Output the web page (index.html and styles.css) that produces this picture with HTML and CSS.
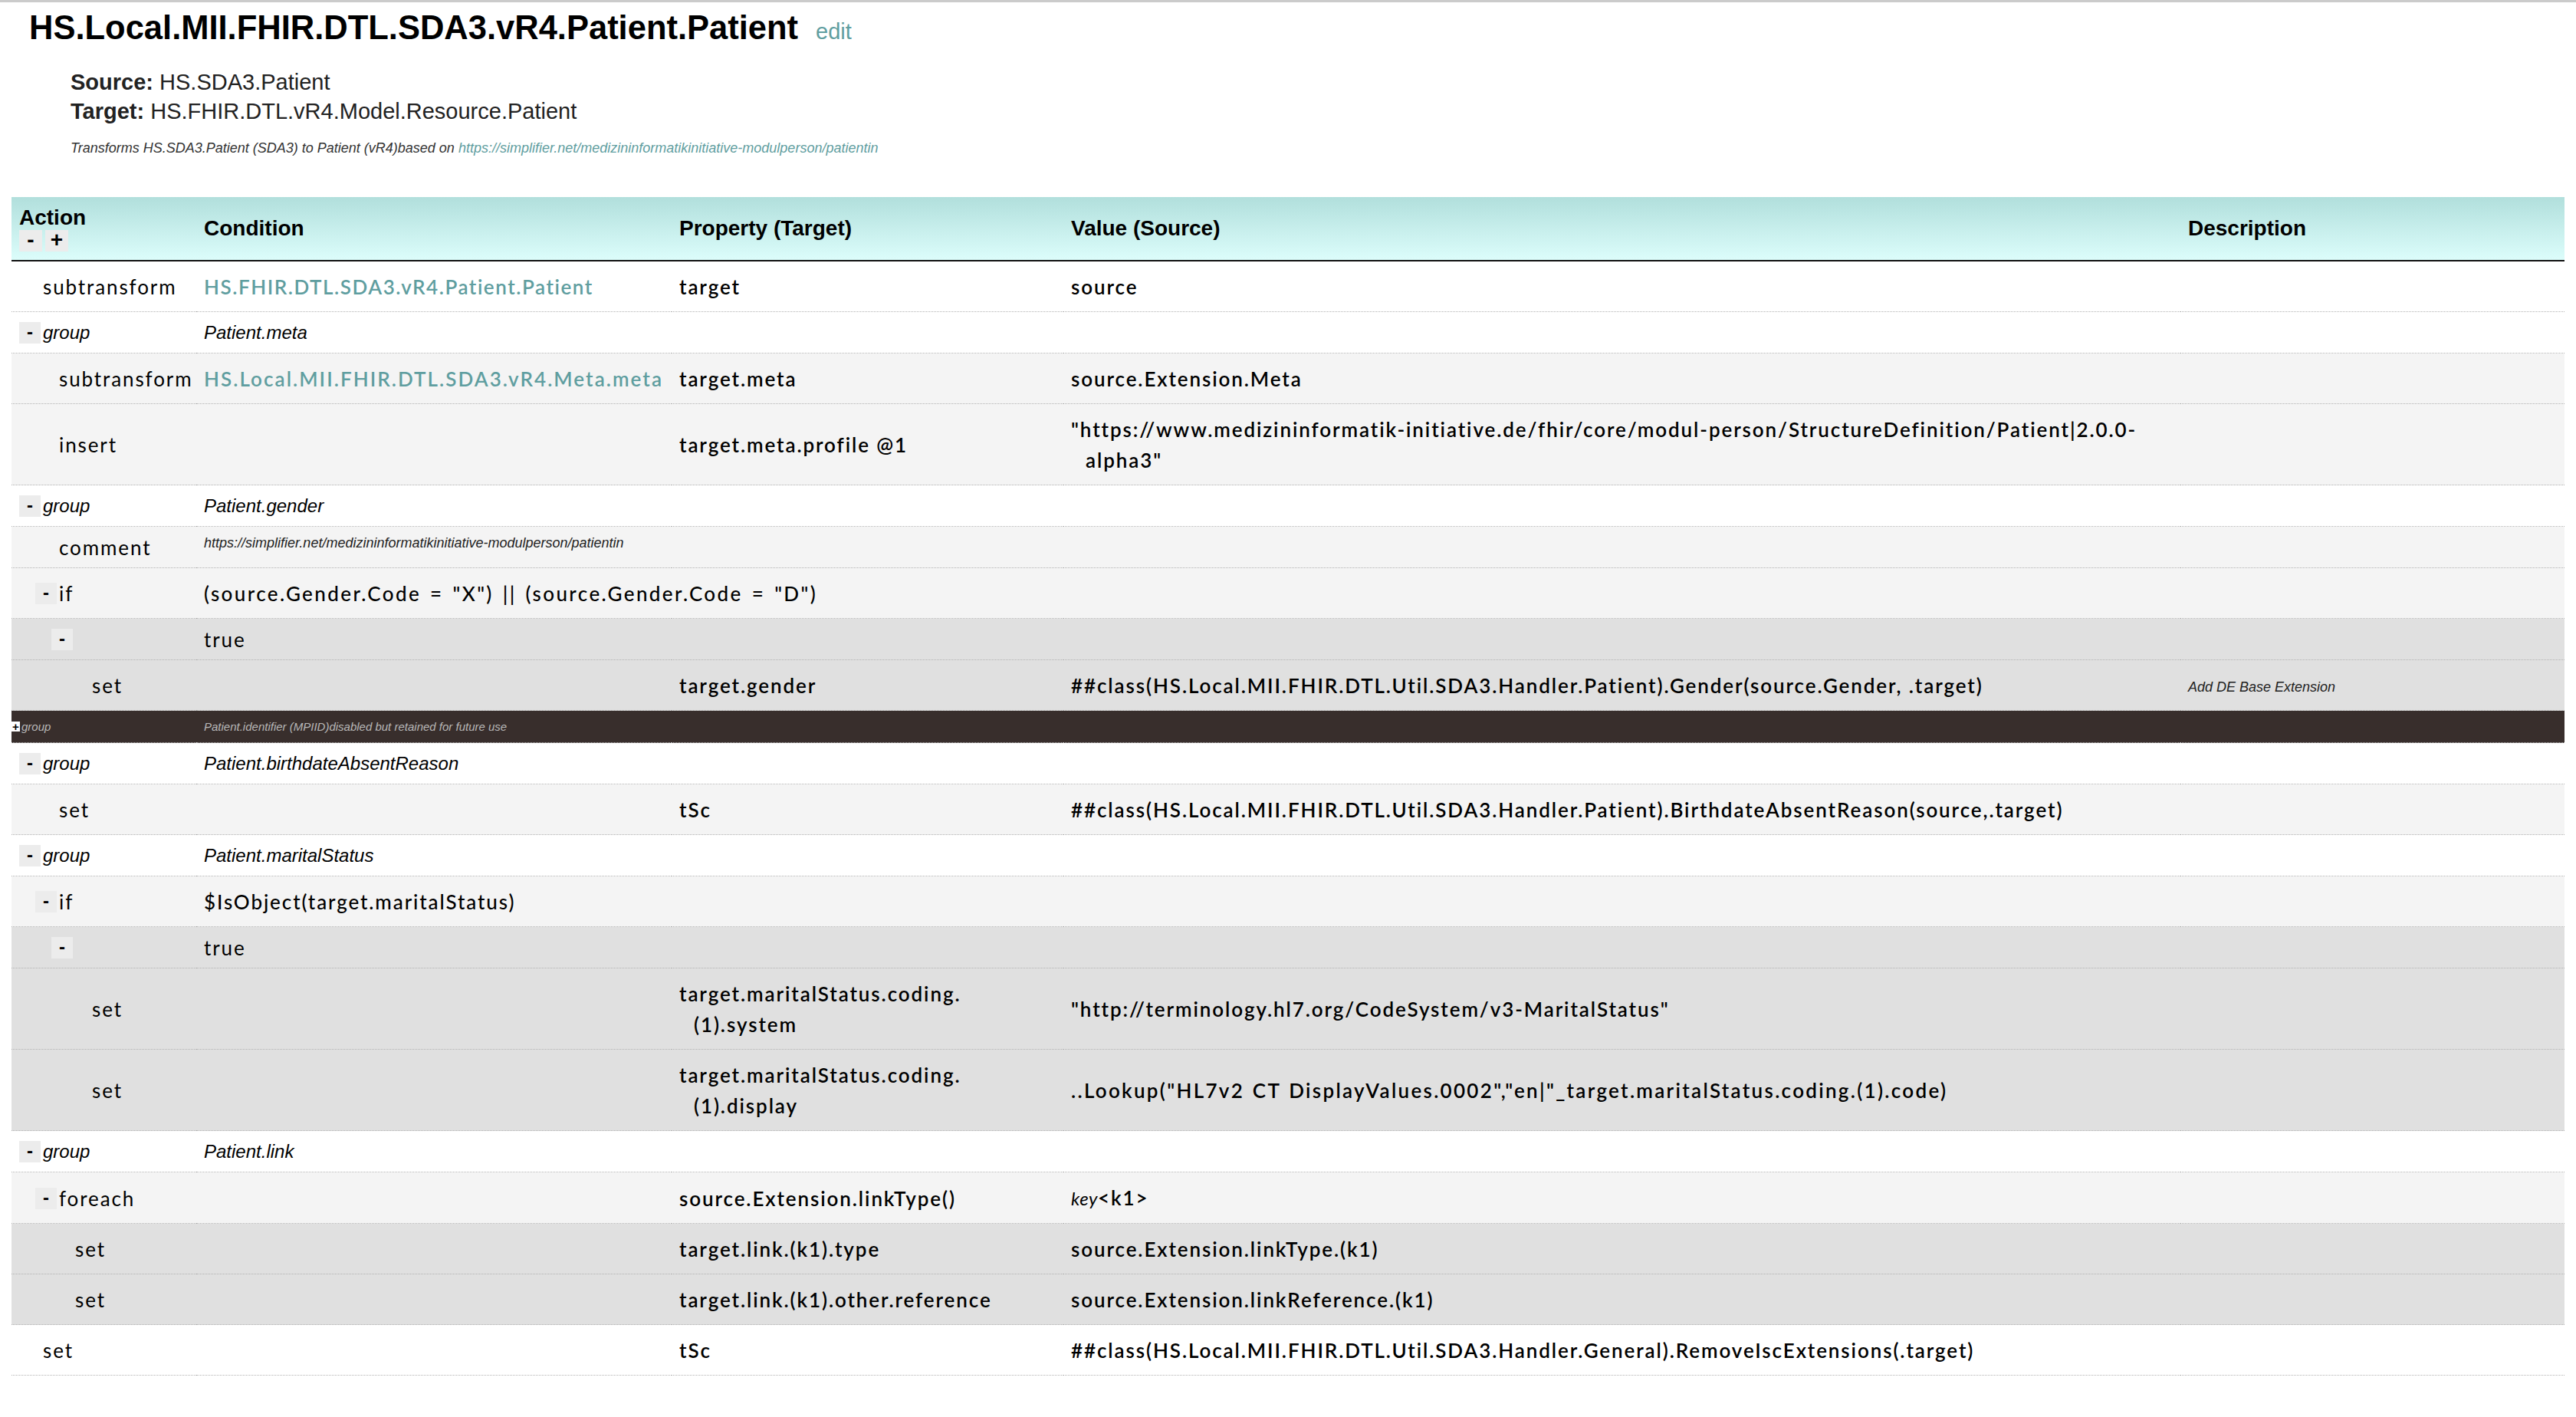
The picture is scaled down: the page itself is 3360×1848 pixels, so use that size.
FILE: index.html
```html
<!DOCTYPE html>
<html>
<head>
<meta charset="utf-8">
<title>HS.Local.MII.FHIR.DTL.SDA3.vR4.Patient.Patient</title>
<link rel="stylesheet" href="styles.css">
</head>
<body>
<div class="page">
  <h1 class="title">HS.Local.MII.FHIR.DTL.SDA3.vR4.Patient.Patient<a class="edit" href="#">edit</a></h1>
  <div class="meta">
    <div><b>Source:</b> HS.SDA3.Patient</div>
    <div><b>Target:</b> HS.FHIR.DTL.vR4.Model.Resource.Patient</div>
  </div>
  <p class="desc">Transforms HS.SDA3.Patient (SDA3) to Patient (vR4)based on <a href="#">https://simplifier.net/medizininformatikinitiative-modulperson/patientin</a></p>

  <table class="dtl">
    <colgroup>
      <col class="c-act"><col class="c-cond"><col class="c-prop"><col class="c-val"><col class="c-desc">
    </colgroup>
    <thead>
      <tr>
        <th class="h-act">Action<div class="h-btns"><span class="htg">-</span><span class="htg">+</span></div></th>
        <th>Condition</th>
        <th>Property (Target)</th>
        <th>Value (Source)</th>
        <th>Description</th>
      </tr>
    </thead>
    <tbody>
      <tr class="lv0">
        <td class="act d0"><div class="ac"><span class="sp"></span>subtransform</div></td>
        <td><span class="lnk">HS.FHIR.DTL.SDA3.vR4.Patient.Patient</span></td>
        <td><div class="code">target</div></td>
        <td><div class="code">source</div></td>
        <td></td>
      </tr>
      <tr class="grp">
        <td class="act d0"><div class="ac"><span class="tg">-</span><span class="gn">group</span></div></td>
        <td><span class="gn">Patient.meta</span></td>
        <td></td><td></td><td></td>
      </tr>
      <tr class="lv1">
        <td class="act d1"><div class="ac"><span class="sp"></span>subtransform</div></td>
        <td><span class="lnk lnk-w">HS.Local.MII.FHIR.DTL.SDA3.vR4.Meta.meta</span></td>
        <td><div class="code">target.meta</div></td>
        <td><div class="code">source.Extension.Meta</div></td>
        <td></td>
      </tr>
      <tr class="lv1">
        <td class="act d1"><div class="ac"><span class="sp"></span>insert</div></td>
        <td></td>
        <td><div class="code">target.meta.profile @1</div></td>
        <td><div class="code">"https://www.medizininformatik-initiative.de/fhir/core/modul-person/StructureDefinition/Patient|2.0.0-<br>alpha3"</div></td>
        <td></td>
      </tr>
      <tr class="grp">
        <td class="act d0"><div class="ac"><span class="tg">-</span><span class="gn">group</span></div></td>
        <td><span class="gn">Patient.gender</span></td>
        <td></td><td></td><td></td>
      </tr>
      <tr class="lv1">
        <td class="act d1"><div class="ac"><span class="sp"></span>comment</div></td>
        <td class="top"><span class="note">https://simplifier.net/medizininformatikinitiative-modulperson/patientin</span></td>
        <td></td><td></td><td></td>
      </tr>
      <tr class="lv1">
        <td class="act d1"><div class="ac"><span class="tg">-</span>if</div></td>
        <td><div class="expr loose">(source.Gender.Code = "X") || (source.Gender.Code = "D")</div></td>
        <td></td><td></td><td></td>
      </tr>
      <tr class="lv2">
        <td class="act d2"><div class="ac"><span class="tg">-</span></div></td>
        <td><div class="cv">true</div></td>
        <td></td><td></td><td></td>
      </tr>
      <tr class="lv2">
        <td class="act d3"><div class="ac"><span class="sp"></span>set</div></td>
        <td></td>
        <td><div class="code">target.gender</div></td>
        <td><div class="code">##class(HS.Local.MII.FHIR.DTL.Util.SDA3.Handler.Patient).Gender(source.Gender, .target)</div></td>
        <td><span class="note">Add DE Base Extension</span></td>
      </tr>
      <tr class="off">
        <td class="act"><div class="oc"><span class="otg">+</span>group</div></td>
        <td>Patient.identifier (MPIID)disabled but retained for future use</td>
        <td></td><td></td><td></td>
      </tr>
      <tr class="grp">
        <td class="act d0"><div class="ac"><span class="tg">-</span><span class="gn">group</span></div></td>
        <td><span class="gn">Patient.birthdateAbsentReason</span></td>
        <td></td><td></td><td></td>
      </tr>
      <tr class="lv1">
        <td class="act d1"><div class="ac"><span class="sp"></span>set</div></td>
        <td></td>
        <td><div class="code">tSc</div></td>
        <td><div class="code">##class(HS.Local.MII.FHIR.DTL.Util.SDA3.Handler.Patient).BirthdateAbsentReason(source,.target)</div></td>
        <td></td>
      </tr>
      <tr class="grp">
        <td class="act d0"><div class="ac"><span class="tg">-</span><span class="gn">group</span></div></td>
        <td><span class="gn">Patient.maritalStatus</span></td>
        <td></td><td></td><td></td>
      </tr>
      <tr class="lv1">
        <td class="act d1"><div class="ac"><span class="tg">-</span>if</div></td>
        <td><div class="expr">$IsObject(target.maritalStatus)</div></td>
        <td></td><td></td><td></td>
      </tr>
      <tr class="lv2">
        <td class="act d2"><div class="ac"><span class="tg">-</span></div></td>
        <td><div class="cv">true</div></td>
        <td></td><td></td><td></td>
      </tr>
      <tr class="lv2">
        <td class="act d3"><div class="ac"><span class="sp"></span>set</div></td>
        <td></td>
        <td><div class="code">target.maritalStatus.coding.<br>(1).system</div></td>
        <td><div class="code">"http://terminology.hl7.org/CodeSystem/v3-MaritalStatus"</div></td>
        <td></td>
      </tr>
      <tr class="lv2">
        <td class="act d3"><div class="ac"><span class="sp"></span>set</div></td>
        <td></td>
        <td><div class="code">target.maritalStatus.coding.<br>(1).display</div></td>
        <td><div class="code wide">..Lookup("HL7v2 CT DisplayValues.0002","en|"_target.maritalStatus.coding.(1).code)</div></td>
        <td></td>
      </tr>
      <tr class="grp">
        <td class="act d0"><div class="ac"><span class="tg">-</span><span class="gn">group</span></div></td>
        <td><span class="gn">Patient.link</span></td>
        <td></td><td></td><td></td>
      </tr>
      <tr class="lv1">
        <td class="act d1"><div class="ac"><span class="tg">-</span>foreach</div></td>
        <td></td>
        <td><div class="code">source.Extension.linkType()</div></td>
        <td><div class="code"><i class="key">key</i>&lt;k1&gt;</div></td>
        <td></td>
      </tr>
      <tr class="lv2">
        <td class="act d2"><div class="ac"><span class="sp"></span>set</div></td>
        <td></td>
        <td><div class="code">target.link.(k1).type</div></td>
        <td><div class="code">source.Extension.linkType.(k1)</div></td>
        <td></td>
      </tr>
      <tr class="lv2">
        <td class="act d2"><div class="ac"><span class="sp"></span>set</div></td>
        <td></td>
        <td><div class="code">target.link.(k1).other.reference</div></td>
        <td><div class="code">source.Extension.linkReference.(k1)</div></td>
        <td></td>
      </tr>
      <tr class="lv0">
        <td class="act d0"><div class="ac"><span class="sp"></span>set</div></td>
        <td></td>
        <td><div class="code">tSc</div></td>
        <td><div class="code">##class(HS.Local.MII.FHIR.DTL.Util.SDA3.Handler.General).RemoveIscExtensions(.target)</div></td>
        <td></td>
      </tr>
    </tbody>
  </table>
</div>
</body>
</html>
```

FILE: styles.css
```css
* { box-sizing: border-box; }

body {
  margin: 0;
  border-top: 3px solid #cbcbcb;
  background: #fff;
  color: #000;
  font-family: "Liberation Sans", Arial, sans-serif;
}

.page { padding-top: 8px; }

.title {
  margin: 0 0 0 38px;
  font-size: 43.5px;
  line-height: 50px;
  font-weight: bold;
}

.edit {
  margin-left: 23px;
  font-size: 29px;
  font-weight: normal;
  color: #5f9ea0;
  text-decoration: none;
}

.meta {
  margin: 22px 0 0 92px;
  font-size: 29px;
  line-height: 38px;
  color: #222;
}

.desc {
  margin: 18px 0 0 92px;
  font-size: 18px;
  line-height: 22px;
  font-style: italic;
  color: #333;
}
.desc a { color: #5f9ea0; text-decoration: none; }

/* ---------- table ---------- */
.dtl {
  margin: 53px 0 0 15px;
  width: 3330px;
  border-collapse: collapse;
  table-layout: fixed;
}
.c-act { width: 241px; }
.c-cond { width: 620px; }
.c-prop { width: 511px; }
.c-val { width: 1457px; }
.c-desc { width: 501px; }

.dtl th {
  height: 83px;
  padding: 0 10px;
  text-align: left;
  vertical-align: middle;
  font-size: 28px;
  font-weight: bold;
  line-height: 32px;
  background: linear-gradient(#b1dfdc, #dcfdfb);
  border-bottom: 2px solid #111;
}
.h-btns { display: flex; gap: 4px; }
.htg {
  width: 30px;
  height: 28px;
  background: #ececec;
  font-size: 28px;
  line-height: 26px;
  text-align: center;
}

.dtl td {
  padding: 13px 10px 12px;
  vertical-align: middle;
  border-bottom: 1px dotted #b2b2b2;
  font-family: "Lato", "Liberation Sans", sans-serif;
  font-size: 26px;
  line-height: 28px;
  letter-spacing: 1.9px;
}

.lv0 td, .grp td { background: #fff; }
.lv1 td { background: #f4f4f4; }
.lv2 td { background: #e0e0e0; }

.dtl td.d1 { padding-left: 31px; }
.dtl td.d2 { padding-left: 52px; }
.dtl td.d3 { padding-left: 74px; }

.ac {
  display: flex;
  align-items: center;
  height: 28px;
  white-space: nowrap;
}
.sp { flex: none; width: 31px; }
.tg {
  flex: none;
  width: 28px;
  height: 28px;
  margin-right: 3px;
  background: #ececec;
  font-family: "Liberation Sans", Arial, sans-serif;
  font-weight: bold;
  font-size: 24px;
  line-height: 26px;
  letter-spacing: 0;
  text-align: center;
}

.gn {
  display: block;
  font-family: "Liberation Sans", Arial, sans-serif;
  font-style: italic;
  font-size: 24px;
  line-height: 28px;
  letter-spacing: 0;
}

.cv { line-height: 28px; }

.lnk {
  color: #5f9ea0;
  font-weight: 600;
  letter-spacing: 1.55px;
}
.lnk-w { letter-spacing: 2.05px; }

.expr {
  font-weight: 500;
  line-height: 40px;
  white-space: nowrap;
}
.expr.loose { letter-spacing: 2.4px; word-spacing: 3px; }

.code {
  font-weight: 600;
  line-height: 40px;
  padding-left: 19px;
  text-indent: -19px;
}
.code.wide { word-spacing: 2px; letter-spacing: 2.3px; }
.key { font-weight: 400; font-size: 24px; letter-spacing: 0.5px; }

.note {
  font-family: "Liberation Sans", Arial, sans-serif;
  font-style: italic;
  font-size: 18px;
  letter-spacing: 0;
  color: #222;
}
.dtl td.top { vertical-align: top; padding-top: 3px; }

.off td {
  background: #382e2c;
  color: #b8b8b8;
  font-family: "Liberation Sans", Arial, sans-serif;
  font-style: italic;
  font-size: 15px;
  line-height: 17px;
  letter-spacing: 0;
}
.dtl .off td { padding: 12px 10px; }
.dtl .off td.act { padding-left: 0; }
.oc { display: flex; align-items: center; height: 17px; }
.otg {
  flex: none;
  width: 11px;
  height: 13px;
  margin-right: 2px;
  background: #fff;
  color: #000;
  font-style: normal;
  font-weight: bold;
  font-size: 15px;
  line-height: 13px;
  text-align: center;
}
```
